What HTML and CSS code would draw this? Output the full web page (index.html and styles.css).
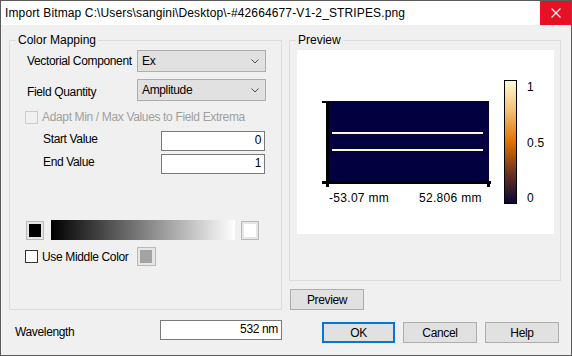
FILE: index.html
```html
<!DOCTYPE html>
<html>
<head>
<meta charset="utf-8">
<link rel="stylesheet" href="styles.css">
</head>
<body>
<div class="window">
  <div class="titlebar">
    <span class="title">Import Bitmap C:\Users\sangini\Desktop\-#42664677-V1-2_STRIPES.png</span>
    <div class="close">
      <svg width="10" height="10" viewBox="0 0 10 10"><path d="M0.5 0.5 L9.5 9.5 M9.5 0.5 L0.5 9.5" stroke="#fff" stroke-width="1.1" fill="none"/></svg>
    </div>
  </div>
  <div class="client">
    <div class="col-left">
      <div class="group group-left">
        <span class="group-title">Color Mapping</span>
        <div class="row row-combo1">
          <span class="lbl lbl-combo">Vectorial Component</span>
          <div class="combo"><span>Ex</span><svg class="chev" width="8" height="5" viewBox="0 0 8 5"><path d="M0.5 0.5 L4 4 L7.5 0.5" stroke="#505050" fill="none"/></svg></div>
        </div>
        <div class="row row-combo2">
          <span class="lbl lbl-combo lbl-low">Field Quantity</span>
          <div class="combo"><span>Amplitude</span><svg class="chev" width="8" height="5" viewBox="0 0 8 5"><path d="M0.5 0.5 L4 4 L7.5 0.5" stroke="#505050" fill="none"/></svg></div>
        </div>
        <div class="row row-check">
          <span class="check check-disabled"></span>
          <span class="lbl disabled">Adapt Min / Max Values to Field Extrema</span>
        </div>
        <div class="row row-input1">
          <span class="lbl lbl-input">Start Value</span>
          <div class="input input-val">0</div>
        </div>
        <div class="row row-input2">
          <span class="lbl lbl-input">End Value</span>
          <div class="input input-val">1</div>
        </div>
        <div class="row row-grad">
          <div class="swatch"><div class="swatch-inner black"></div></div>
          <div class="gradient"></div>
          <div class="swatch swatch-white"><div class="swatch-inner white"></div></div>
        </div>
        <div class="row row-middle">
          <span class="check"></span>
          <span class="lbl lbl-mid">Use Middle Color</span>
          <div class="swatch swatch-mid"><div class="swatch-inner gray"></div></div>
        </div>
      </div>
      <div class="row row-wave">
        <span class="lbl lbl-wave">Wavelength</span>
        <div class="input input-wave">532 nm</div>
      </div>
    </div>
    <div class="col-right">
      <div class="group group-right">
        <span class="group-title">Preview</span>
        <div class="preview">
          <svg width="257" height="184" viewBox="0 0 257 184" class="plot">
            <defs>
              <linearGradient id="cb" x1="0" y1="0" x2="0" y2="1">
                <stop offset="0" stop-color="#fffbd8"/>
                <stop offset="0.25" stop-color="#f2bf73"/>
                <stop offset="0.5" stop-color="#e07000"/>
                <stop offset="0.75" stop-color="#6b3420"/>
                <stop offset="1" stop-color="#0a0538"/>
              </linearGradient>
            </defs>
            <rect x="32" y="51" width="160" height="80" fill="#02003e"/>
            <rect x="35" y="82" width="151" height="2" fill="#fff8d2"/>
            <rect x="35" y="99" width="151" height="2" fill="#fff8d2"/>
            <rect x="29" y="51" width="3" height="86" fill="#000"/>
            <rect x="25" y="51" width="7" height="2" fill="#000"/>
            <rect x="25" y="131" width="169" height="3" fill="#000"/>
            <rect x="190" y="131" width="3" height="6" fill="#000"/>
            <rect x="207.5" y="30.5" width="12" height="123" fill="url(#cb)" stroke="#000" stroke-width="1"/>
            <text x="32" y="152" class="ax">-53.07 mm</text>
            <text x="122" y="152" class="ax">52.806 mm</text>
            <text x="230" y="41" class="ax">1</text>
            <text x="230" y="97" class="ax">0.5</text>
            <text x="230" y="152" class="ax">0</text>
          </svg>
        </div>
      </div>
      <div class="btn btn-preview">Preview</div>
      <div class="buttons">
        <div class="btn btn-ok">OK</div>
        <div class="btn">Cancel</div>
        <div class="btn">Help</div>
      </div>
    </div>
  </div>
</div>
</body>
</html>
```
FILE: styles.css
```css
* { box-sizing: border-box; }
html, body { margin: 0; padding: 0; background: #f0f0f0; }
body {
  font-family: "Liberation Sans", Arial, sans-serif;
  font-size: 12px;
  color: #000;
}
.window {
  width: 572px;
  height: 356px;
  border: 1px solid #5b5b5b;
  display: flex;
  flex-direction: column;
  background: #f0f0f0;
}
.titlebar {
  height: 24px;
  background: #fff;
  display: flex;
  align-items: center;
  flex-shrink: 0;
}
.title {
  flex: 1;
  padding-left: 4px;
  font-size: 12px;
  letter-spacing: 0.13px;
  line-height: 16px;
  white-space: nowrap;
  overflow: hidden;
}
.close {
  width: 31px;
  height: 24px;
  background: #e81123;
  display: flex;
  align-items: center;
  justify-content: center;
  padding-left: 1px;
}
.client {
  flex: 1;
  display: flex;
  padding: 0 10px 0 8px;
  gap: 7px;
  letter-spacing: -0.35px;
}
.col-left { width: 273px; display: flex; flex-direction: column; }
.col-right { width: 272px; display: flex; flex-direction: column; }
.group {
  margin-top: 15px;
  border: 1px solid #dcdcdc;
  display: flex;
  flex-direction: column;
}
.group-left { height: 270px; }
.group-right { height: 241px; }
.group-title {
  align-self: flex-start;
  margin: -8px 0 0 6px;
  padding: 0 2px;
  line-height: 14px;
  height: 14px;
  background: #f0f0f0;
  letter-spacing: 0;
}
.row { display: flex; align-items: center; }
.lbl { line-height: 14px; white-space: nowrap; }
.lbl-combo { width: 127px; padding-left: 17px; }
.lbl-low { padding-top: 3px; }
.row-combo1 { margin-top: 3px; }
.row-combo2 { margin-top: 7px; }
.combo {
  width: 129px;
  height: 22px;
  background: #e1e1e1;
  border: 1px solid #adadad;
  display: flex;
  align-items: center;
  justify-content: space-between;
  padding: 0 6px 0 4px;
}
.row-check { margin-top: 9px; padding-left: 15px; gap: 4px; height: 14px; }
.check {
  width: 13px;
  height: 13px;
  border: 1px solid #333;
  background: #fff;
  flex-shrink: 0;
}
.check-disabled { border-color: #cccccc; background: #f0f0f0; }
.disabled { color: #a0a0a0; }
.row-input1 { margin-top: 7px; align-items: flex-start; }
.row-input2 { margin-top: 3px; align-items: flex-start; }
.lbl-input { width: 151px; padding-left: 33px; padding-top: 1px; }
.input {
  background: #fff;
  border: 1px solid #7a7a7a;
  text-align: right;
  line-height: 17px;
  padding-right: 3px;
}
.input-val { width: 104px; height: 20px; }
.row-grad { margin-top: 46px; padding-left: 16px; }
.swatch {
  width: 18px;
  height: 19px;
  border: 1px solid #b9b9b9;
  background: #e6e6e6;
  padding: 2px 2px;
  flex-shrink: 0;
}
.swatch-inner { width: 12px; height: 13px; }
.black { background: #000; }
.white { background: #fff; }
.gray { background: #a3a3a3; }
.gradient {
  width: 184px;
  height: 20px;
  margin-left: 7px;
  background: linear-gradient(to right, #000, #fff);
}
.swatch-white { margin-left: 6px; }
.row-middle { margin-top: 7px; padding-left: 15px; height: 19px; }
.lbl-mid { margin-left: 4px; width: 95px; }
.swatch-mid { width: 19px; }
.row-wave { margin-top: 10px; }
.lbl-wave { flex: 1; padding-left: 6px; padding-top: 3px; }
.input-wave { width: 122px; height: 20px; }
.preview {
  margin: 3px 0 0 7px;
  width: 257px;
  height: 184px;
  background: #fff;
}
.plot { display: block; }
.ax { font-family: "Liberation Sans", Arial, sans-serif; font-size: 12px; fill: #000; letter-spacing: 0.3px; }
.btn {
  height: 21px;
  width: 74px;
  background: #e1e1e1;
  border: 1px solid #adadad;
  display: flex;
  align-items: center;
  justify-content: center;
  line-height: 14px;
}
.btn-preview { margin: 8px 0 0 1px; }
.buttons {
  margin-top: 12px;
  display: flex;
  justify-content: flex-end;
  gap: 8px;
  padding-right: 2px;
}
.btn-ok { border: 2px solid #0078d7; width: 73px; }
```
